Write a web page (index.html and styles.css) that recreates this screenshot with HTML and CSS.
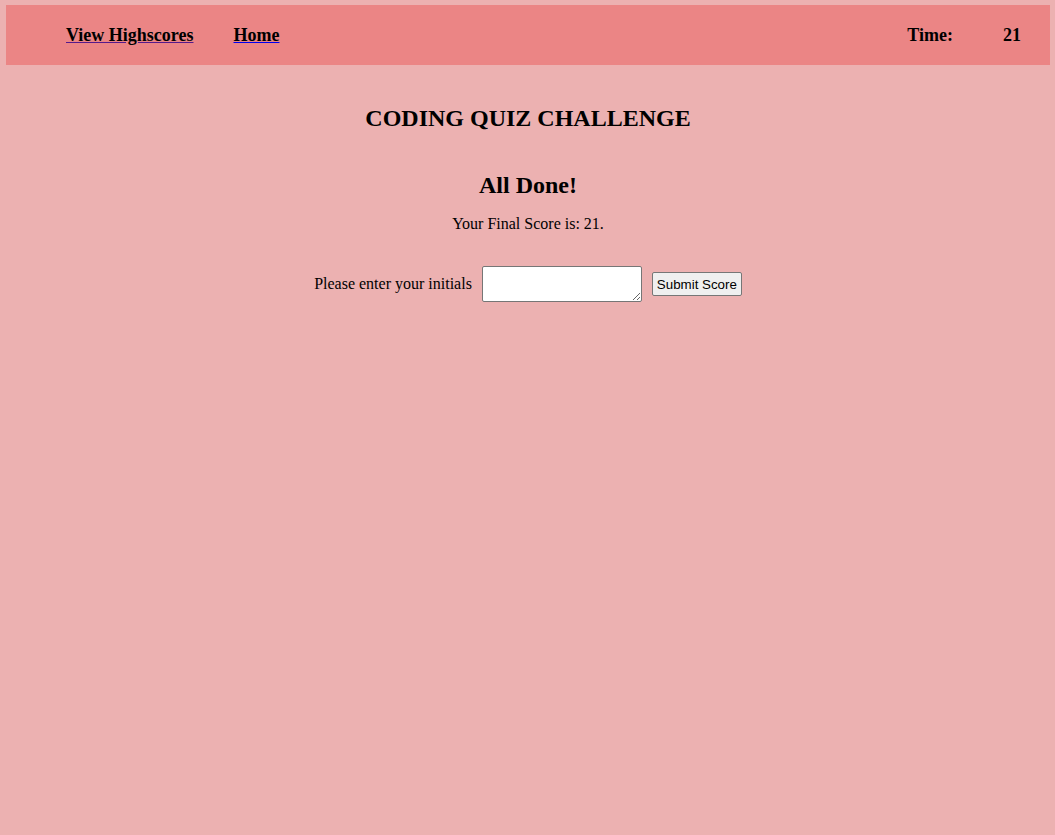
FILE: index.html
```
<!DOCTYPE html>
<html>
<head>
<meta charset="utf-8">
<link rel="stylesheet" href="styles.css">
</head>
<body>
<header class="topbar">
  <nav class="nav">
    <a class="nav-link visited" href="#"><span>View Highscores</span></a>
    <a class="nav-link" href="#"><span>Home</span></a>
  </nav>
  <div class="timer"><span class="timer-label">Time:</span><span class="timer-value">21</span></div>
</header>
<main class="main">
  <h1 class="title">CODING QUIZ CHALLENGE</h1>
  <h2 class="done">All Done!</h2>
  <p class="score">Your Final Score is: 21.</p>
  <form class="form">
    <label class="label">Please enter your initials</label>
    <textarea class="initials"></textarea>
    <button class="submit" type="button">Submit Score</button>
  </form>
</main>
</body>
</html>
```
FILE: styles.css
```
html, body {
  margin: 0;
  padding: 0;
}
body {
  background: #ecb1b1;
  font-family: "Liberation Serif", "Times New Roman", serif;
  color: #000;
  padding: 5px 5px 0 6px;
  min-height: 835px;
  box-sizing: border-box;
}
.topbar {
  background: #eb8585;
  height: 60px;
  display: flex;
  align-items: center;
  justify-content: space-between;
  padding: 1px 29px 0 60px;
  box-sizing: border-box;
}
.nav {
  display: flex;
  gap: 40px;
}
.nav-link {
  font-weight: bold;
  font-size: 18px;
  color: #000;
  text-decoration: underline;
  text-decoration-color: #0000ee;
}
.nav-link.visited {
  text-decoration-color: #551a8b;
}
.timer {
  display: flex;
  gap: 50px;
  font-weight: bold;
  font-size: 18px;
}
.main {
  display: flex;
  flex-direction: column;
  align-items: center;
}
.title {
  font-size: 24px;
  margin: 40px 0 0;
}
.done {
  font-size: 24px;
  margin: 40px 0 0;
}
.score {
  font-size: 16px;
  margin: 16px 0 0;
}
.form {
  display: flex;
  align-items: center;
  gap: 10px;
  margin-top: 33px;
}
.label {
  font-size: 16px;
}
.initials {
  width: 160px;
  height: 36px;
  box-sizing: border-box;
  background: #fff;
  border: 1px solid #767676;
  border-radius: 2px;
  resize: both;
}
.submit {
  font-family: Arial, "Liberation Sans", sans-serif;
  font-size: 13.33px;
  padding: 1px 4px;
  height: 24px;
  background: #efefef;
  border: 1px solid #767676;
  border-radius: 2px;
  color: #000;
}
```
